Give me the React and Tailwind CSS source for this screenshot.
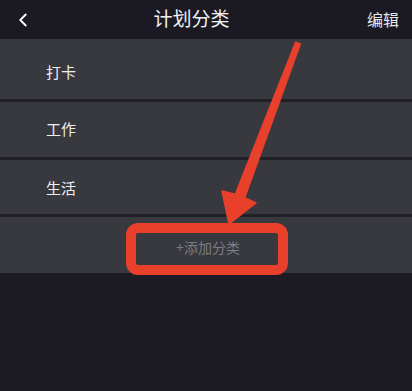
import { ChevronLeft } from "lucide-react";

const categories = [
  { name: "打卡", h: "h-[63px]", pad: "pt-[6px]" },
  { name: "工作", h: "h-[58px]", pad: "" },
  { name: "生活", h: "h-[57px]", pad: "pt-[2px]" },
];

const App = () => {
  return (
    <div className="relative w-[412px] h-[391px] overflow-hidden bg-[#1d1c24] font-['Noto_Sans_CJK_SC','Noto_Sans',sans-serif]">
      {/* header */}
      <div className="flex items-center h-[39px] bg-[#1b1a23] pl-[12px] pr-[13px]">
        <ChevronLeft className="w-[22px] h-[22px] text-white" strokeWidth={2} />
        <div className="flex-1 text-center text-[19px] text-[#f2f2f4] pr-[18px] pb-[2px]">计划分类</div>
        <div className="text-[16px] text-[#e6e6ea] pb-[1px]">编辑</div>
      </div>

      {/* list */}
      <div className="flex flex-col bg-[#38383f]">
        {categories.map((c) => (
          <div key={c.name} className={`${c.h} flex items-center pl-[46px] ${c.pad} border-b-[3px] border-[#222128] text-[15px] text-[#f0f0f2]`}>
            {c.name}
          </div>
        ))}
        <div className="h-[56px] flex items-center justify-center text-[14px] text-[#7c7c84] pl-[4px] pt-[4px]">
          +添加分类
        </div>
      </div>

      {/* annotation */}
      <div className="absolute left-[126px] top-[223px] w-[162px] h-[52px] border-[10px] border-[#e8402b] rounded-[12px]" />
      <svg className="absolute left-0 top-0" width="412" height="391" viewBox="0 0 412 391">
        <polygon
          points="295.7,42.1 300.3,43.9 244.7,197.8 256,203 229,224 222,191 235.3,194.2"
          fill="#e8402b"
          stroke="#e8402b"
          strokeWidth="1.5"
          strokeLinejoin="round"
        />
      </svg>
    </div>
  );
};

export default App;
